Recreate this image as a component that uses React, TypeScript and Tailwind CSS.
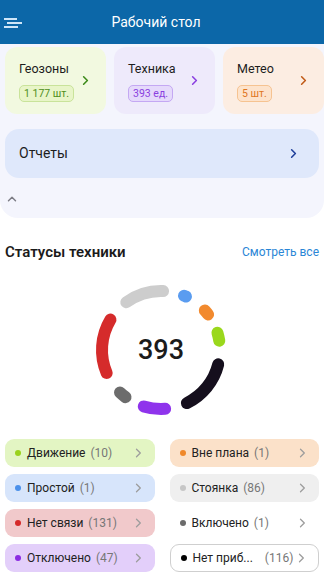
import { ChevronRight, ChevronUp } from "lucide-react"

const cards = [
    { title: "Геозоны", badge: "1 177 шт.", bg: "bg-[#f2f9e0]", badgeCls: "bg-[#e8f5c8] border-[#c9e39a] text-[#4f8f1c]", chev: "text-[#3b8a18]" },
    { title: "Техника", badge: "393 ед.", bg: "bg-[#eeeafb]", badgeCls: "bg-[#e5d9fb] border-[#c4a8f3] text-[#8a3fe0]", chev: "text-[#8a3fe0]" },
    { title: "Метео", badge: "5 шт.", bg: "bg-[#fcede2]", badgeCls: "bg-[#fde3cc] border-[#f6c391] text-[#e0771f]", chev: "text-[#c05a16]" },
]

const segments = [
    { from: -36, to: 2, color: "#cdcdcd" },
    { from: 23, to: 25, color: "#5a9cf0" },
    { from: 48, to: 53, color: "#f28a2e" },
    { from: 73, to: 81, color: "#9ad81c" },
    { from: 104, to: 154, color: "#150f1d" },
    { from: 176, to: 197, color: "#8f34ec" },
    { from: 217, to: 224, color: "#6c6c6c" },
    { from: 247, to: 301, color: "#d52b2b" },
]

const legend = [
    { label: "Движение", count: "(10)", bg: "bg-[#e3f5c3]", dot: "bg-[#9ad21c]", border: "" },
    { label: "Вне плана", count: "(1)", bg: "bg-[#fbe1c9]", dot: "bg-[#f0882a]", border: "" },
    { label: "Простой", count: "(1)", bg: "bg-[#d7e5fb]", dot: "bg-[#4b90ea]", border: "" },
    { label: "Стоянка", count: "(86)", bg: "bg-[#efefef]", dot: "bg-[#c6c6c6]", border: "" },
    { label: "Нет связи", count: "(131)", bg: "bg-[#f1c9cb]", dot: "bg-[#d52a2a]", border: "" },
    { label: "Включено", count: "(1)", bg: "bg-white", dot: "bg-[#6b6b6b]", border: "" },
    { label: "Отключено", count: "(47)", bg: "bg-[#e3cffa]", dot: "bg-[#8b2be2]", border: "" },
    { label: "Нет приб...", count: "(116)", bg: "bg-white", dot: "bg-black", border: "border border-[#cfcfcf]", gap: true },
]

function arc(cx: number, cy: number, r: number, a1: number, a2: number) {
    const rad = (d: number) => (d * Math.PI) / 180
    const x1 = cx + r * Math.sin(rad(a1))
    const y1 = cy - r * Math.cos(rad(a1))
    const x2 = cx + r * Math.sin(rad(a2))
    const y2 = cy - r * Math.cos(rad(a2))
    const large = a2 - a1 > 180 ? 1 : 0
    return `M ${x1} ${y1} A ${r} ${r} 0 ${large} 1 ${x2} ${y2}`
}

function Donut() {
    return (
        <div className="relative ml-[91px] h-[140px] w-[140px]">
            <svg width="140" height="140" viewBox="0 0 140 140">
                {segments.map((s, i) => (
                    <path key={i} d={arc(70, 70, 59, s.from, s.to)} stroke={s.color} strokeWidth="12" strokeLinecap="round" fill="none" />
                ))}
            </svg>
            <div className="absolute inset-0 flex items-center justify-center text-[27px] font-medium text-[#1b1b1b]">393</div>
        </div>
    )
}

function SmallChevron() {
    return (
        <svg className="ml-auto shrink-0" width="7" height="10" viewBox="0 0 7 10">
            <path d="M1.5 1.2 L5.3 5 L1.5 8.8" stroke="#9d9d9d" strokeWidth="1.3" fill="none" strokeLinecap="round" strokeLinejoin="round" />
        </svg>
    )
}

export default function App() {
    return (
        <div className="min-h-[576px] w-[324px] overflow-hidden bg-white font-['Roboto',sans-serif]">
            <header className="relative flex h-11 items-center justify-center bg-[#0c67a8] pr-[12px]">
                <div className="absolute left-[4px] top-[18px] flex flex-col gap-[2.5px]">
                    <span className="ml-0 block h-[1.5px] w-[13px] bg-[#cfe6f8]" />
                    <span className="ml-[3px] block h-[1.5px] w-[15px] bg-[#cfe6f8]" />
                    <span className="ml-0 block h-[1.5px] w-[14px] bg-[#cfe6f8]" />
                </div>
                <h1 className="text-[14px] font-normal text-white">Рабочий стол</h1>
            </header>

            <section className="rounded-b-[18px] bg-[#f4f5fd] pb-[12px] pt-[3px]">
                <div className="flex gap-2 pl-[5px]">
                    {cards.map((c) => (
                        <div key={c.title} className={`flex h-[67px] w-[101px] shrink-0 items-center justify-between rounded-[12px] pl-[14px] pr-[13px] ${c.bg}`}>
                            <div className="flex flex-col gap-[9px] pt-[1px]">
                                <span className="text-[12.5px] leading-[15px] text-[#1d1d1d]">{c.title}</span>
                                <span className={`w-fit whitespace-nowrap rounded-[5px] border px-[4px] py-[1px] text-[10.5px] leading-[13px] ${c.badgeCls}`}>{c.badge}</span>
                            </div>
                            <ChevronRight className={`shrink-0 ${c.chev}`} size={15} strokeWidth={2.5} />
                        </div>
                    ))}
                </div>

                <div className="mx-[5px] mt-[15px] flex h-[49px] items-center justify-between rounded-[14px] bg-[#dfe8fb] pl-[14px] pr-[18px]">
                    <span className="text-[14px] text-[#1d1d1d]">Отчеты</span>
                    <ChevronRight className="shrink-0 text-[#1f3f9a]" size={15} strokeWidth={2.5} />
                </div>

                <div className="mt-[14px] pl-[5px]">
                    <ChevronUp className="text-[#7d7d86]" size={14} strokeWidth={2.5} />
                </div>
            </section>

            <div className="mt-[24px] flex h-5 items-center justify-between px-[5px]">
                <h2 className="text-[15px] font-semibold text-[#1b1b1b]">Статусы техники</h2>
                <span className="text-[12px] text-[#2a86d6]">Смотреть все</span>
            </div>

            <div className="mt-[18px]">
                <Donut />
            </div>

            <div className="mt-[19px] grid grid-cols-2 gap-x-[15px] gap-y-[7px] px-[5px]">
                {legend.map((l) => (
                    <div key={l.label} className={`flex h-[28px] min-w-0 items-center whitespace-nowrap rounded-[9px] pl-[10px] pr-[13px] ${l.bg} ${l.border}`}>
                        <span className={`h-[6px] w-[6px] shrink-0 rounded-full ${l.dot}`} />
                        <span className="ml-[6px] text-[12px] text-[#222]">{l.label}</span>
                        <span className={`ml-[5px] text-[12px] text-[#777] ${l.gap ? "ml-[12px]" : ""}`}>{l.count}</span>
                        <SmallChevron />
                    </div>
                ))}
            </div>
        </div>
    )
}
